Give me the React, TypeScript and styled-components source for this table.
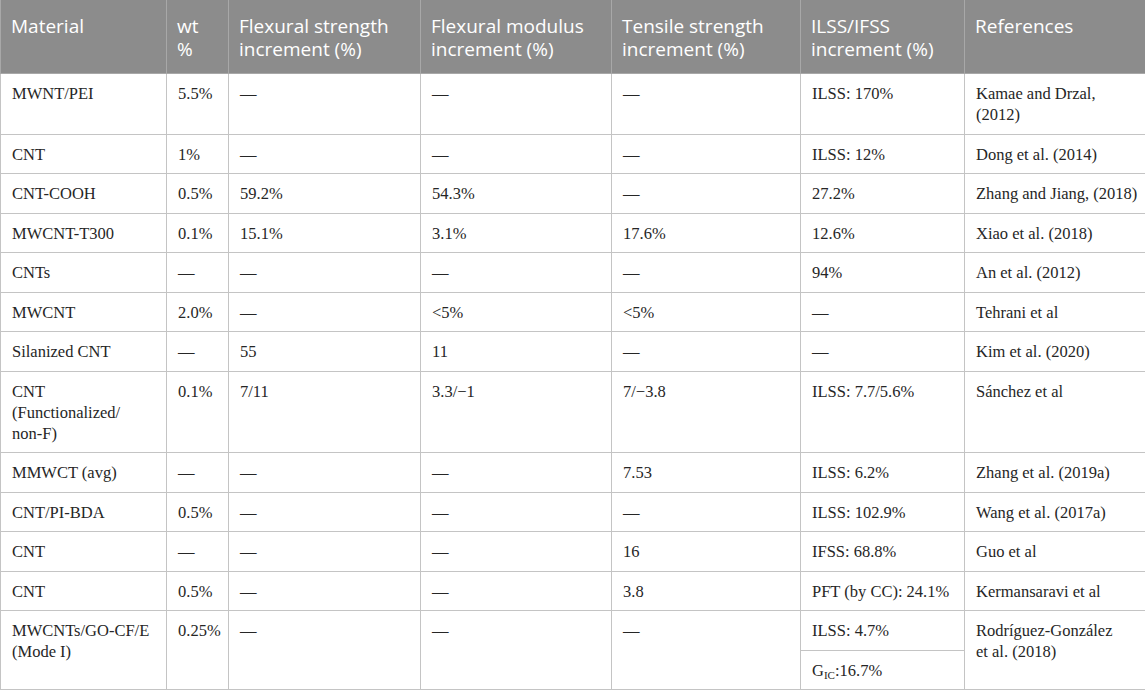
import React from "react";
import styled, { createGlobalStyle } from "styled-components";

const GlobalStyle = createGlobalStyle`
  html, body {
    margin: 0;
    padding: 0;
    background: #fff;
  }
`;

const columns = [166, 62, 192, 191, 189, 164, 181];

const headers = [
  "Material",
  "wt\n%",
  "Flexural strength increment (%)",
  "Flexural modulus increment (%)",
  "Tensile strength increment (%)",
  "ILSS/IFSS increment (%)",
  "References",
];

const D = "\u2014";

// ordinary rows, the last one (split ILSS cell) is written by hand below
const rows: string[][] = [
  ["MWNT/PEI", "5.5%", D, D, D, "ILSS: 170%", "Kamae and Drzal,\n(2012)"],
  ["CNT", "1%", D, D, D, "ILSS: 12%", "Dong et al. (2014)"],
  ["CNT-COOH", "0.5%", "59.2%", "54.3%", D, "27.2%", "Zhang and Jiang, (2018)"],
  ["MWCNT-T300", "0.1%", "15.1%", "3.1%", "17.6%", "12.6%", "Xiao et al. (2018)"],
  ["CNTs", D, D, D, D, "94%", "An et al. (2012)"],
  ["MWCNT", "2.0%", D, "<5%", "<5%", D, "Tehrani et al"],
  ["Silanized CNT", D, "55", "11", D, D, "Kim et al. (2020)"],
  ["CNT\n(Functionalized/\nnon-F)", "0.1%", "7/11", "3.3/\u22121", "7/\u22123.8", "ILSS: 7.7/5.6%", "Sánchez et al"],
  ["MMWCT (avg)", D, D, D, "7.53", "ILSS: 6.2%", "Zhang et al. (2019a)"],
  ["CNT/PI-BDA", "0.5%", D, D, D, "ILSS: 102.9%", "Wang et al. (2017a)"],
  ["CNT", D, D, D, "16", "IFSS: 68.8%", "Guo et al"],
  ["CNT", "0.5%", D, D, "3.8", "PFT (by CC): 24.1%", "Kermansaravi et al"],
];

const App: React.FC = () => {
  return (
    <>
      <GlobalStyle />
      <Table>
        <colgroup>
          {columns.map((w, i) => (
            <col key={i} style={{ width: w }} />
          ))}
        </colgroup>
        <thead>
          <tr>
            {headers.map((h) => (
              <HeadCell key={h}>{h}</HeadCell>
            ))}
          </tr>
        </thead>
        <tbody>
          {rows.map((row, r) => (
            <tr key={r}>
              {row.map((c, i) => (
                <Cell key={i}>{c}</Cell>
              ))}
            </tr>
          ))}
          <tr>
            <Cell rowSpan={2}>{"MWCNTs/GO-CF/E\n(Mode I)"}</Cell>
            <Cell rowSpan={2}>0.25%</Cell>
            <Cell rowSpan={2}>{D}</Cell>
            <Cell rowSpan={2}>{D}</Cell>
            <Cell rowSpan={2}>{D}</Cell>
            <Cell>ILSS: 4.7%</Cell>
            <Cell rowSpan={2}>{"Rodríguez-González\net al. (2018)"}</Cell>
          </tr>
          <tr>
            <Cell>
              G<Sub>IC</Sub>:16.7%
            </Cell>
          </tr>
        </tbody>
      </Table>
    </>
  );
};

const Table = styled.table`
  width: 1145px;
  table-layout: fixed;
  border-collapse: collapse;
`;

const HeadCell = styled.th`
  background: #8c8c8c;
  color: #fff;
  font-family: "Open Sans", "Noto Sans", sans-serif;
  font-size: 19px;
  font-weight: 400;
  line-height: 23px;
  text-align: left;
  vertical-align: top;
  white-space: pre-line;
  padding: 15px 6px 12px 10px;
  border: 1px solid #a8a8a8;
  border-top: none;
`;

const Cell = styled.td`
  color: #262626;
  font-family: "Liberation Serif", "Times New Roman", serif;
  font-size: 16.5px;
  line-height: 21px;
  text-align: left;
  vertical-align: top;
  white-space: pre-line;
  padding: 9px 5px 8.5px 11px;
  border: 1px solid #c4c4c4;
`;

const Sub = styled.sub`
  font-size: 11px;
  vertical-align: -3px;
  line-height: 0;
`;

export default App;
